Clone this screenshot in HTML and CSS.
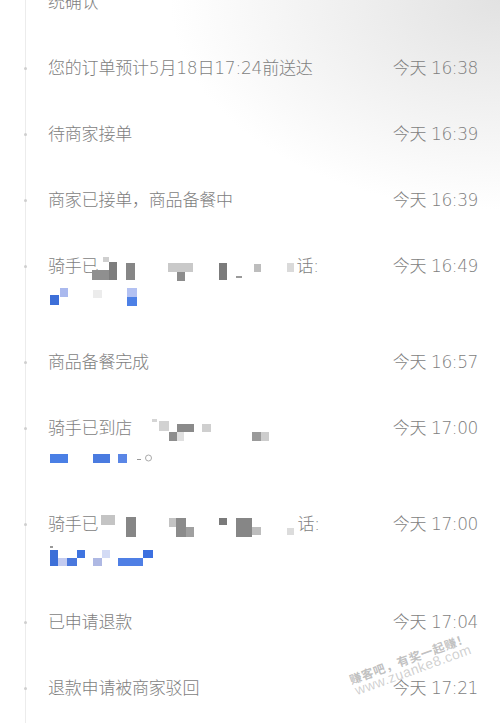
FILE: index.html
```html
<!DOCTYPE html>
<html>
	<head>
		<meta charset="utf-8">
		<title>订单进度</title>
		<link rel="stylesheet" href="styles.css">
	</head>

	<body>
		<div class="timeline">

			<div class="cont">
				<div class="msg">统确认</div>
			</div>

			<div class="row">
				<span class="rail"><i class="dot"></i></span>
				<div class="msg">您的订单预计5月18日17:24前送达</div>
				<div class="time">今天 16:38</div>
			</div>

			<div class="row">
				<span class="rail"><i class="dot"></i></span>
				<div class="msg">待商家接单</div>
				<div class="time">今天 16:39</div>
			</div>

			<div class="row">
				<span class="rail"><i class="dot"></i></span>
				<div class="msg">商家已接单，商品备餐中</div>
				<div class="time">今天 16:39</div>
			</div>

			<div class="row">
				<span class="rail"><i class="dot"></i></span>
				<div class="msg">
					<div class="line">骑手已<svg class="mask shift" width="204" height="30">
						<rect x="11" y="6" width="6" height="5" fill="#cfcfcf"/>
						<rect x="0" y="19" width="17" height="10" fill="#8f8f8f"/>
						<rect x="17" y="11" width="8" height="18" fill="#7d7d7d"/>
						<rect x="34" y="12" width="9" height="17" fill="#868686"/>
						<rect x="76" y="12" width="25" height="9" fill="#c9c9c9"/>
						<rect x="85" y="21" width="8" height="9" fill="#8c8c8c"/>
						<rect x="127" y="12" width="8" height="17" fill="#7b7b7b"/>
						<rect x="144" y="25" width="6" height="2" fill="#9a9a9a"/>
						<rect x="162" y="13" width="7" height="8" fill="#bdbdbd"/>
						<rect x="195" y="12" width="7" height="9" fill="#dadada"/>
					</svg>话:</div>
					<div class="line"><svg class="mask" width="100" height="30">
						<rect x="2" y="14" width="9" height="10" fill="#3d6fd8"/>
						<rect x="12" y="7" width="8" height="9" fill="#aab9ee"/>
						<rect x="45" y="9" width="9" height="8" fill="#ececec"/>
						<rect x="79" y="7" width="10" height="9" fill="#b3c1f2"/>
						<rect x="79" y="16" width="10" height="9" fill="#4d80e6"/>
					</svg></div>
				</div>
				<div class="time">今天 16:49</div>
			</div>

			<div class="row">
				<span class="rail"><i class="dot"></i></span>
				<div class="msg">商品备餐完成</div>
				<div class="time">今天 16:57</div>
			</div>

			<div class="row">
				<span class="rail"><i class="dot"></i></span>
				<div class="msg">
					<div class="line">骑手已到店<svg class="mask" width="140" height="30">
						<rect x="20" y="6" width="5" height="3" fill="#d5d5d5"/>
						<rect x="27" y="8" width="10" height="10" fill="#d2d2d2"/>
						<rect x="45" y="11" width="17" height="8" fill="#8a8a8a"/>
						<rect x="37" y="19" width="8" height="9" fill="#8e8e8e"/>
						<rect x="45" y="19" width="7" height="9" fill="#e0e0e0"/>
						<rect x="70" y="11" width="9" height="8" fill="#cfcfcf"/>
						<rect x="120" y="19" width="9" height="9" fill="#9a9a9a"/>
						<rect x="129" y="19" width="8" height="9" fill="#cdcdcd"/>
					</svg></div>
					<div class="line"><svg class="mask" width="110" height="30">
						<rect x="2" y="11" width="18" height="9" fill="#4a7fe5"/>
						<rect x="45" y="11" width="17" height="9" fill="#4a7be0"/>
						<rect x="70" y="11" width="9" height="9" fill="#5a86e6"/>
						<rect x="89" y="16" width="4" height="1" fill="#999999"/>
						<circle cx="100.5" cy="15" r="3" fill="none" stroke="#aaaaaa"/>
					</svg></div>
				</div>
				<div class="time">今天 17:00</div>
			</div>

			<div class="row tall">
				<span class="rail"><i class="dot"></i></span>
				<div class="msg">
					<div class="line">骑手已<svg class="mask" width="199" height="30">
						<rect x="3" y="6" width="14" height="10" fill="#c4c4c4"/>
						<rect x="28" y="8" width="10" height="20" fill="#868686"/>
						<rect x="71" y="9" width="7" height="9" fill="#c3c3c3"/>
						<rect x="78" y="9" width="10" height="19" fill="#8b8b8b"/>
						<rect x="88" y="18" width="8" height="10" fill="#a0a0a0"/>
						<rect x="121" y="9" width="8" height="7" fill="#7a7a7a"/>
						<rect x="138" y="9" width="16" height="19" fill="#868686"/>
						<rect x="154" y="18" width="9" height="8" fill="#bdbdbd"/>
						<rect x="189" y="19" width="7" height="7" fill="#dcdcdc"/>
					</svg>话:</div>
					<div class="line"><svg class="mask" width="110" height="30">
						<rect x="2" y="7" width="3" height="2" fill="#999999"/>
						<rect x="2" y="11" width="8" height="16" fill="#3c6fd8"/>
						<rect x="10" y="19" width="9" height="8" fill="#c3cbf0"/>
						<rect x="19" y="19" width="10" height="8" fill="#4a78dd"/>
						<rect x="29" y="11" width="8" height="8" fill="#3f74e0"/>
						<rect x="45" y="19" width="9" height="8" fill="#aeb8e3"/>
						<rect x="54" y="11" width="8" height="8" fill="#d3dbf5"/>
						<rect x="70" y="19" width="25" height="8" fill="#4f7fe5"/>
						<rect x="95" y="11" width="10" height="8" fill="#3c70e0"/>
					</svg></div>
				</div>
				<div class="time">今天 17:00</div>
			</div>

			<div class="row">
				<span class="rail"><i class="dot"></i></span>
				<div class="msg">已申请退款</div>
				<div class="time">今天 17:04</div>
			</div>

			<div class="row">
				<span class="rail"><i class="dot"></i></span>
				<div class="msg">退款申请被商家驳回</div>
				<div class="time">今天 17:21</div>
			</div>

		</div>

		<div class="watermark">
			<div class="wm-title">赚客吧，有奖一起赚！</div>
			<div class="wm-url">www.zuanke8.com</div>
		</div>
	</body>
</html>
```

FILE: styles.css
```css
html, body {
	height: 100%;
}

body {
	margin: 0;
	overflow: hidden;
	position: relative;
	font-family: "DejaVu Sans", "Noto Sans CJK SC", sans-serif;
	font-size: 17px;
	font-weight: 300;
	color: #7e7e7e;
	background:
		radial-gradient(ellipse 330px 210px at 100% 0%, #e2e2e2 0%, rgba(255, 255, 255, 0) 100%),
		#ffffff;
}

.timeline {
	margin-top: -13px;
	background: linear-gradient(to right, transparent 25px, #ececec 25px, #ececec 26px, transparent 26px);
	min-height: 760px;
}

.cont {
	display: flex;
	padding: 0 22px 18px 48px;
	line-height: 30px;
}

.row {
	display: flex;
	padding: 18px 22px 18px 0;
	line-height: 30px;
}

.row.tall {
	padding-bottom: 20px;
}

.rail {
	width: 48px;
	flex: none;
	height: 30px;
	display: flex;
	align-items: center;
}

.dot {
	display: block;
	width: 3px;
	height: 3px;
	margin-left: 24px;
	border-radius: 50%;
	background: #cfcfcf;
}

.msg {
	flex: 1;
	white-space: nowrap;
	letter-spacing: -0.2px;
}

.line {
	height: 30px;
}

.mask {
	display: inline-block;
	vertical-align: top;
	overflow: visible;
}

.mask.shift {
	margin-left: -6px;
}

.time {
	flex: none;
	white-space: nowrap;
	letter-spacing: -0.4px;
}

.watermark {
	position: absolute;
	left: 336px;
	top: 651px;
	width: 150px;
	text-align: center;
	transform: rotate(-20deg);
	line-height: 13px;
}

.wm-title {
	font-family: "Noto Sans CJK SC", sans-serif;
	font-size: 12px;
	font-weight: bold;
	letter-spacing: 0.6px;
	color: rgba(140, 140, 140, 0.55);
}

.wm-url {
	font-family: "Liberation Sans", sans-serif;
	font-size: 14px;
	font-weight: normal;
	letter-spacing: 0.4px;
	color: rgba(150, 150, 150, 0.45);
}
```
